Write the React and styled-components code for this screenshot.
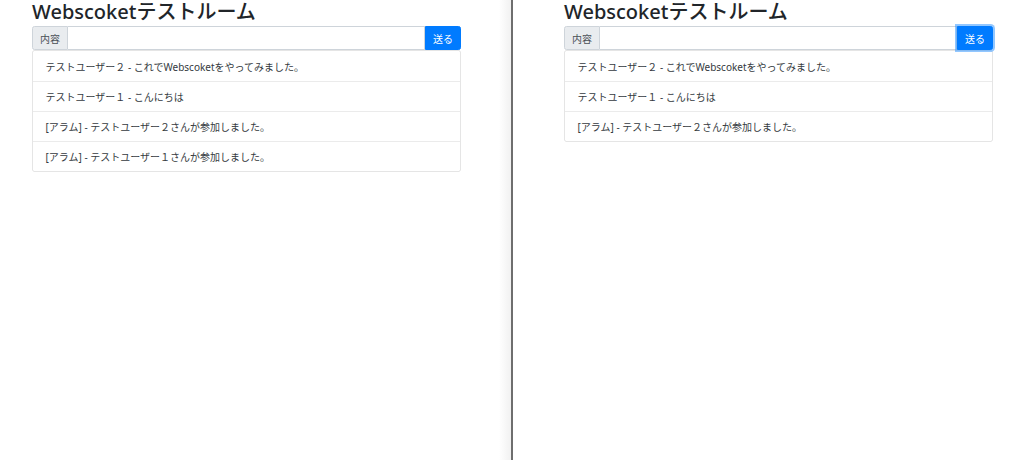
import React from "react";
import styled, { createGlobalStyle } from "styled-components";

const GlobalStyle = createGlobalStyle`
  html, body {
    margin: 0;
    padding: 0;
    background: #fff;
  }
  body {
    font-family: "Noto Sans", "Noto Sans CJK JP", sans-serif;
    color: #212529;
  }
`;

const Screen = styled.div`
  display: flex;
  height: 460px;
  overflow: hidden;
`;

const Window = styled.div`
  flex: 0 0 ${({ width }) => width}px;
  box-sizing: border-box;
  padding-left: ${({ inset }) => inset}px;
  background: ${({ shaded }) =>
    shaded ? "linear-gradient(to right, #fff calc(100% - 12px), #f1f1f1)" : "#fff"};
`;

const Divider = styled.div`
  flex: 0 0 2px;
  background: #6e6e6e;
`;

const Container = styled.div`
  width: 429px;
`;

const Title = styled.h2`
  margin: 0 0 3px;
  font-size: 20px;
  font-weight: 500;
  line-height: 23px;
  color: #212529;
`;

const InputGroup = styled.div`
  display: flex;
  height: 24px;
  box-sizing: border-box;
`;

const Label = styled.span`
  display: flex;
  align-items: center;
  padding: 0 7px;
  background: #e9ecef;
  border: 1px solid #ced4da;
  border-radius: 2.5px 0 0 2.5px;
  font-size: 10px;
  color: #495057;
`;

const Field = styled.input`
  flex: 1;
  min-width: 0;
  margin: 0;
  padding: 0 7px;
  border: 1px solid #ced4da;
  border-left: none;
  outline: none;
  font-size: 10px;
`;

const SendButton = styled.button`
  margin: 0;
  padding: 0 7px;
  border: 1px solid #007bff;
  border-radius: 0 2.5px 2.5px 0;
  background: #007bff;
  color: #fff;
  font-family: inherit;
  font-size: 10px;
  box-shadow: ${({ focused }) =>
    focused ? "0 0 0 2px rgba(38, 143, 255, 0.5)" : "none"};
  position: relative;
`;

const MessageList = styled.ul`
  list-style: none;
  margin: 0;
  padding: 0;
  border: 1px solid rgba(0, 0, 0, 0.1);
  border-radius: 2.5px;
`;

const MessageItem = styled.li`
  display: flex;
  align-items: center;
  height: 30px;
  padding: 0 12.5px;
  font-size: 10px;
  color: #343a40;
  & + & {
    height: 29px;
    border-top: 1px solid rgba(0, 0, 0, 0.08);
  }
`;

const leftMessages = [
  "テストユーザー２ - これでWebscoketをやってみました。",
  "テストユーザー１ - こんにちは",
  "[アラム] - テストユーザー２さんが参加しました。",
  "[アラム] - テストユーザー１さんが参加しました。",
];

const rightMessages = leftMessages.slice(0, 3);

const ChatRoom = ({ messages, focused }) => (
  <Container>
    <Title>Webscoketテストルーム</Title>
    <InputGroup>
      <Label>内容</Label>
      <Field type="text" />
      <SendButton focused={focused}>送る</SendButton>
    </InputGroup>
    <MessageList>
      {messages.map((m, i) => (
        <MessageItem key={i}>{m}</MessageItem>
      ))}
    </MessageList>
  </Container>
);

const App = () => {
  return (
    <>
      <GlobalStyle />
      <Screen>
        <Window width={511} inset={32} shaded>
          <ChatRoom messages={leftMessages} />
        </Window>
        <Divider />
        <Window width={509} inset={51}>
          <ChatRoom messages={rightMessages} focused />
        </Window>
      </Screen>
    </>
  );
};

export default App;
